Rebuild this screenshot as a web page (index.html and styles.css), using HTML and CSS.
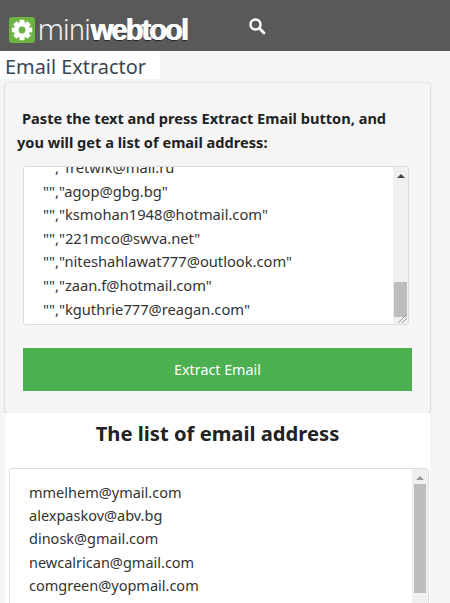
FILE: index.html
```html
<!DOCTYPE html>
<html lang="en">
<head>
<meta charset="UTF-8" />
<meta name="viewport" content="width=device-width, initial-scale=1.0"/>
<title>Email Extractor</title>
<link rel="stylesheet" href="styles.css">
</head>
<body>

<header class="topbar">
    <div class="logo">
        <svg class="logo-icon" width="26" height="26" viewBox="0 0 26 26">
            <rect x="0" y="0" width="26" height="26" rx="3" fill="#6cb33f"/>
            <g fill="#fff">
                <circle cx="13" cy="13" r="7.6"/>
                <rect x="10.4" y="2.8" width="5.2" height="20.4" rx="1"/>
                <rect x="10.4" y="2.8" width="5.2" height="20.4" rx="1" transform="rotate(45 13 13)"/>
                <rect x="10.4" y="2.8" width="5.2" height="20.4" rx="1" transform="rotate(90 13 13)"/>
                <rect x="10.4" y="2.8" width="5.2" height="20.4" rx="1" transform="rotate(135 13 13)"/>
            </g>
            <circle cx="13" cy="13" r="3.4" fill="#6cb33f"/>
        </svg>
        <span class="logo-text"><span class="logo-light">mini</span><span class="logo-bold">webtool</span></span>
    </div>
    <svg class="search-icon" width="18" height="18" viewBox="0 0 18 18">
        <circle cx="7.5" cy="7.5" r="5" fill="none" stroke="#fff" stroke-width="2.4"/>
        <line x1="11.3" y1="11.3" x2="16" y2="16" stroke="#fff" stroke-width="2.8" stroke-linecap="round"/>
    </svg>
</header>

<h1 class="page-title">Email Extractor</h1>

<main class="content">
    <section class="card">
        <p class="intro">Paste the text and press Extract Email button, and<br>you will get a list of email address:</p>
        <div class="textbox input-box">
            <div class="lines input-lines">
                <div>"","fretwik@mail.ru"</div>
                <div>"","agop@gbg.bg"</div>
                <div>"","ksmohan1948@hotmail.com"</div>
                <div>"","221mco@swva.net"</div>
                <div>"","niteshahlawat777@outlook.com"</div>
                <div>"","zaan.f@hotmail.com"</div>
                <div>"","kguthrie777@reagan.com"</div>
            </div>
            <div class="scrollbar input-scroll">
                <span class="arrow"></span>
                <span class="thumb"></span>
                <svg class="grip" width="15" height="15" viewBox="0 0 15 15">
                    <path d="M5 14 L14 5 M9 14 L14 9" stroke="#999" stroke-width="1" fill="none"/>
                </svg>
            </div>
        </div>
        <button class="extract-button">Extract Email</button>
    </section>

    <section class="results">
        <h2>The list of email address</h2>
        <div class="textbox output-box">
            <div class="lines output-lines">
                <div>mmelhem@ymail.com</div>
                <div>alexpaskov@abv.bg</div>
                <div>dinosk@gmail.com</div>
                <div>newcalrican@gmail.com</div>
                <div>comgreen@yopmail.com</div>
                <div>williamhawk@sbcglobal.net</div>
            </div>
            <div class="scrollbar output-scroll">
                <span class="arrow arrow-light"></span>
                <span class="thumb"></span>
            </div>
        </div>
    </section>
</main>

</body>
</html>
```

FILE: styles.css
```css
:root {
    --font-family: 'Noto Sans', 'Open Sans', Arial, sans-serif;
    --bg-color: #f4f5f5;
    --card-bg: #f5f5f5;
    --text-color: #222;
    --border-color: #ddd;
    --scroll-bg: #f0f0f0;
    --scroll-thumb: #bdbdbd;
}

html, body {
    height: 603px;
    overflow: hidden;
}

body {
    font-family: var(--font-family);
    margin: 0;
    background: var(--bg-color);
    color: var(--text-color);
}

.topbar {
    display: flex;
    align-items: center;
    height: 51px;
    padding-left: 9px;
    background: #595959;
}

.logo {
    display: flex;
    align-items: center;
    width: 240px;
    padding-top: 8px;
    box-sizing: border-box;
}

.logo-icon {
    flex-shrink: 0;
}

.logo-text {
    margin-left: 3px;
    font-size: 29px;
    line-height: 30px;
    color: #fff;
}

.logo-light {
    font-family: Roboto, 'Liberation Sans', sans-serif;
    font-weight: 300;
    letter-spacing: -0.6px;
    color: #eee;
}

.logo-bold {
    font-family: 'Liberation Sans', Arial, sans-serif;
    font-weight: 700;
    letter-spacing: -1.9px;
    text-shadow: 1px 0 0 #fff, 0 1px 1px #222;
}

.search-icon {
    margin-left: -1px;
}

.page-title {
    width: 160px;
    height: 28px;
    margin: 0;
    padding-left: 5px;
    box-sizing: border-box;
    background: #fff;
    font-size: 19.9px;
    font-weight: 400;
    line-height: 31px;
    color: #3a4652;
    white-space: nowrap;
}

.content {
    width: 425px;
    margin: 4px 0 0 5px;
}

.card {
    height: 330px;
    box-sizing: border-box;
    padding: 23px 18px 0 12px;
    background: var(--card-bg);
    border-radius: 3px;
    box-shadow: 0 0 2px #ccc, 0 1px 2px #bbb;
}

.intro {
    margin: 0 0 12px;
    font-size: 14.6px;
    font-weight: 700;
    line-height: 24px;
    text-indent: 5px;
    white-space: nowrap;
}

.textbox {
    display: flex;
    background: #fff;
    border: 1px solid var(--border-color);
    border-radius: 3px;
    overflow: hidden;
}

.input-box {
    width: 384px;
    height: 157px;
    margin-left: 6px;
}

.lines {
    flex: 1;
    color: #333;
    font-size: 14.5px;
    white-space: nowrap;
}

.input-lines {
    padding: 0 0 0 19px;
    margin-top: -11px;
    line-height: 23.6px;
    font-size: 14.7px;
}

.scrollbar {
    display: flex;
    flex-direction: column;
    align-items: center;
    position: relative;
    background: var(--scroll-bg);
}

.input-scroll {
    width: 15px;
}

.output-scroll {
    width: 16px;
}

.arrow {
    width: 0;
    height: 0;
    margin-top: 7px;
    border-left: 4px solid transparent;
    border-right: 4px solid transparent;
    border-bottom: 4px solid #444;
}

.arrow-light {
    border-bottom-color: #999;
}

.thumb {
    display: block;
    background: var(--scroll-thumb);
}

.input-scroll .thumb {
    width: 13px;
    height: 35px;
    margin-top: 104px;
}

.output-scroll .thumb {
    width: 12px;
    height: 109px;
    margin-top: 4px;
}

.grip {
    position: absolute;
    right: 0;
    bottom: 0;
}

.extract-button {
    display: block;
    width: 389px;
    height: 43px;
    margin: 23px 0 0 6px;
    border: none;
    background: #4caf50;
    color: #fff;
    font-family: var(--font-family);
    font-size: 14.3px;
    cursor: pointer;
}

.results {
    height: 190px;
    background: #fff;
}

.results h2 {
    margin: 0;
    padding-top: 6px;
    height: 55px;
    box-sizing: border-box;
    text-align: center;
    font-size: 20.2px;
    font-weight: 700;
    line-height: 28px;
}

.output-box {
    width: 420px;
    height: 160px;
    margin-left: 4px;
    box-sizing: border-box;
}

.output-lines {
    padding: 12px 0 0 19px;
    line-height: 23.2px;
}
```
